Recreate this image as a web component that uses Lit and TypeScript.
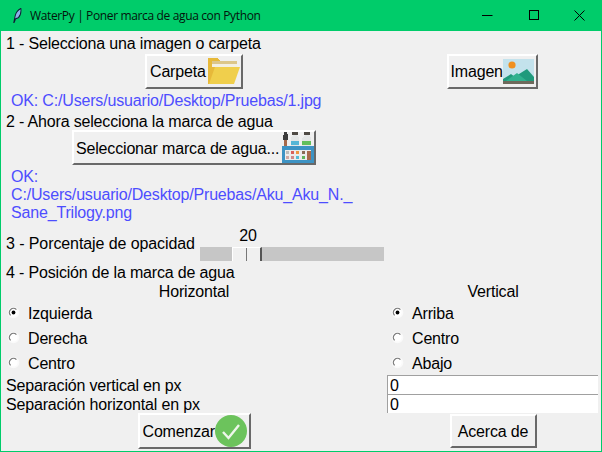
import { LitElement, html, css, svg } from "lit";
import { customElement } from "lit/decorators.js";

const folder = svg`<svg class="ico" width="35" height="31" viewBox="0 0 35 31" shape-rendering="crispEdges">
<path d="M2 2h10l2 3v23H2z" fill="#e7b93a"/><path d="M6 5h25v3H6z" fill="#dcc68a"/><path d="M6 8h25v3H6z" fill="#f3efe2"/>
<path d="M3 28L9 11h25l-6 17z" fill="#f0cf4c" shape-rendering="auto"/></svg>`;
const picture = svg`<svg class="ico" width="32" height="29" viewBox="0 0 32 29">
<rect x="0" y="2" width="31" height="25" fill="#c3e2ec"/><circle cx="9" cy="8" r="3.6" fill="#f0901e"/>
<path d="M0 24v-2l8-5 4 3 4-3 8-5 7 8v4z" fill="#1f9a7c"/><path d="M3 24l11-8 10 8z" fill="#2fb18e"/><rect x="0" y="24" width="31" height="3" fill="#6e6a5c"/></svg>`;
const paints = svg`<svg class="ico" width="36" height="33" viewBox="0 0 36 33" shape-rendering="crispEdges">
<path d="M5 1h3v2h1v6H4V4h1z" fill="#3c3c3c"/><rect x="5" y="9" width="3" height="7" fill="#a7694a"/>
<rect x="13" y="1" width="6" height="3" fill="#4f4a44"/><path d="M14 4h4l2 3v9h-8V7z" fill="#e4e6e6"/><rect x="12" y="10" width="8" height="4" fill="#56b6d6"/>
<rect x="25" y="1" width="6" height="3" fill="#4f4a44"/><path d="M26 4h4l2 3v9h-9V7z" fill="#e4e6e6"/><rect x="23" y="10" width="9" height="4" fill="#62bf5c"/>
<rect x="3" y="15" width="32" height="17" fill="#3d93c4"/><rect x="6" y="19" width="26" height="10" fill="#ececec"/><rect x="28" y="20" width="4" height="9" fill="#a8694c"/>
<rect x="7" y="20" width="3" height="3" fill="#bbb"/><rect x="12" y="20" width="3" height="3" fill="#d9605a"/><rect x="17" y="20" width="3" height="3" fill="#ef9640"/><rect x="23" y="20" width="3" height="3" fill="#8a6a55"/>
<rect x="7" y="25" width="3" height="3" fill="#cfa9a5"/><rect x="12" y="25" width="3" height="3" fill="#d08a8a"/><rect x="17" y="25" width="3" height="3" fill="#55bcd6"/><rect x="23" y="25" width="3" height="3" fill="#5eb45c"/></svg>`;
const check = svg`<svg class="ico" width="32" height="32" viewBox="0 0 32 32"><circle cx="16" cy="16" r="16" fill="#6cc35c"/><path d="M8 17l5.5 6L24 10" fill="none" stroke="#eef6ea" stroke-width="2.4"/></svg>`;
const feather = svg`<svg width="9" height="15" viewBox="0 0 12 16" preserveAspectRatio="none"><path d="M1 15.5L3 8c1-3 4-6 7.5-7.5C11 4 10 8 7 10.5L3.5 11.5 1.5 15.5z" fill="#8fb0ea" stroke="#0e1c34" stroke-width="1.2"/></svg>`;

@customElement("app-root")
export class AppRoot extends LitElement {
  static styles = css`
    :host { display: block; width: 602px; height: 452px; font-family: "Liberation Sans", Arial, sans-serif; font-size: 16px; letter-spacing: -0.17px; color: #000; }
    .win { width: 602px; height: 452px; box-sizing: border-box; display: flex; flex-direction: column; background: #f0f0f0; border: 1px solid #00cc6a; border-top: 0; overflow: hidden; }
    .title { height: 31px; flex: none; margin: 0 -1px; background: #00cc6a; display: flex; align-items: center; padding-left: 13px; font: 12px "Open Sans", "Noto Sans", sans-serif; color: #04140c; }
    .title .name { margin-left: 8px; flex: 1; white-space: nowrap; letter-spacing: -0.36px; }
    .ctl { width: 46px; height: 31px; display: flex; align-items: center; justify-content: center; }
    .ctl svg { display: block; }
    .body { flex: 1; display: grid; grid-template-columns: 386px 214px; grid-template-rows: 22px 36px 21px 20px 35px 56px 40px 20px 19px 25px 25px 25px 19px 19px 36px; }
    .lab { display: flex; align-items: center; padding-left: 5px; padding-top: 4px; white-space: nowrap; }
    .lab.sep { padding-top: 2px; }
    .full { grid-column: 1 / span 2; }
    .blue { color: #4d4dff; padding-left: 10px; padding-top: 2px; }
    .multi { display: block; line-height: 18px; padding-top: 3px; }
    .cen { display: flex; align-items: center; justify-content: center; }
    .btn { box-sizing: border-box; display: inline-flex; align-items: center; background: #f0f0f0; border: 2px solid; border-color: #fff #696969 #696969 #fff; font: inherit; letter-spacing: inherit; color: inherit; padding: 0 2px; white-space: nowrap; }
    .btn.in { padding-left: 3px; }
    .btn span { padding-top: 2px; }
    .pr4 { padding-right: 4px; }
    .pr2 { padding-right: 2px; }
    .ico { display: block; flex: none; }
    .scale-row { display: flex; align-items: flex-end; padding-left: 5px; }
    .scale-row .t { width: 194px; line-height: 18px; padding-bottom: 8px; white-space: nowrap; letter-spacing: -0.09px; }
    .scale { width: 184px; }
    .val { text-align: center; line-height: 18px; margin-bottom: 2px; margin-right: 88px; }
    .trough { height: 14px; background: #c6c6c6; display: flex; padding-left: 32px; }
    .thumb { box-sizing: border-box; width: 30px; height: 14px; background: #f0f0f0; border-style: solid; border-width: 1px 2px 0 1px; border-color: #fff #555 #555 #fff; display: flex; justify-content: center; }
    .thumb i { display: block; width: 1px; background: #777; margin-left: -1px; }
    .radio { display: flex; align-items: center; padding-left: 6px; }
    .radio .txt { margin-left: 8px; padding-top: 2px; }
    .rad { display: block; flex: none; }
    .col2 { grid-column: 2; padding-left: 4px; }
    .head { display: flex; align-items: center; justify-content: center; padding-top: 2px; }
    .entry { box-sizing: border-box; background: #fff; border-top: 1px solid #a0a0a0; border-left: 1px solid #a0a0a0; margin-right: 3px; padding: 2px 0 0 2px; line-height: 18px; display: flex; align-items: center; }
  `;

  private radio(on: boolean) {
    return svg`<svg class="rad" width="13" height="13" viewBox="0 0 13 13">
      <circle cx="6.5" cy="6.5" r="5.8" fill="#fafafa"/>
      <circle cx="6.5" cy="6.5" r="4" fill="#fff"/>
      <path d="M3.6 9.4A4.1 4.1 0 0 1 9.4 3.6" fill="none" stroke="#7a7a7a" stroke-width="1.3"/>
      ${on ? svg`<circle cx="6.5" cy="6.5" r="1.9" fill="#000"/>` : ""}</svg>`;
  }

  render() {
    return html`<div class="win">
      <div class="title">${feather}<span class="name">WaterPy | Poner marca de agua con Python</span>
        <span class="ctl"><svg width="11" height="11" viewBox="0 0 11 11"><path d="M0 5.5h10.5" stroke="#000" fill="none"/></svg></span>
        <span class="ctl"><svg width="11" height="11" viewBox="0 0 11 11"><rect x="1.5" y=".5" width="9" height="9" stroke="#000" fill="none"/></svg></span>
        <span class="ctl"><svg width="11" height="11" viewBox="0 0 11 11"><path d="M.5 .5l10 10M10.5 .5l-10 10" stroke="#000" fill="none"/></svg></span>
      </div>
      <div class="body">
        <div class="lab full">1 - Selecciona una imagen o carpeta</div>
        <div class="cen"><button class="btn in" style="width:98px;height:35px"><span>Carpeta</span>${folder}</button></div>
        <div class="cen pr4"><button class="btn" style="width:91px;height:35px"><span>Imagen</span>${picture}</button></div>
        <div class="lab blue full">OK: C:/Users/usuario/Desktop/Pruebas/1.jpg</div>
        <div class="lab full">2 - Ahora selecciona la marca de agua</div>
        <div class="cen"><button class="btn" style="width:244px;height:35px"><span>Seleccionar marca de agua...</span>${paints}</button></div><div></div>
        <div class="lab blue multi full">OK:<br>C:/Users/usuario/Desktop/Pruebas/Aku_Aku_N._<br>Sane_Trilogy.png</div>
        <div class="scale-row"><span class="t">3 - Porcentaje de opacidad</span>
          <div class="scale"><div class="val">20</div><div class="trough"><div class="thumb"><i></i></div></div></div></div><div></div>
        <div class="lab full">4 - Posición de la marca de agua</div>
        <div class="head">Horizontal</div><div class="head pr2">Vertical</div>
        <div class="radio">${this.radio(true)}<span class="txt">Izquierda</span></div><div class="radio col2">${this.radio(true)}<span class="txt">Arriba</span></div>
        <div class="radio">${this.radio(false)}<span class="txt">Derecha</span></div><div class="radio col2">${this.radio(false)}<span class="txt">Centro</span></div>
        <div class="radio">${this.radio(false)}<span class="txt">Centro</span></div><div class="radio col2">${this.radio(false)}<span class="txt">Abajo</span></div>
        <div class="lab sep">Separación vertical en px</div><div class="entry">0</div>
        <div class="lab sep">Separación horizontal en px</div><div class="entry">0</div>
        <div class="cen"><button class="btn in" style="width:113px;height:36px"><span>Comenzar</span>${check}</button></div>
        <div class="cen pr2"><button class="btn" style="width:87px;height:34px;justify-content:center"><span>Acerca de</span></button></div>
      </div>
    </div>`;
  }
}
